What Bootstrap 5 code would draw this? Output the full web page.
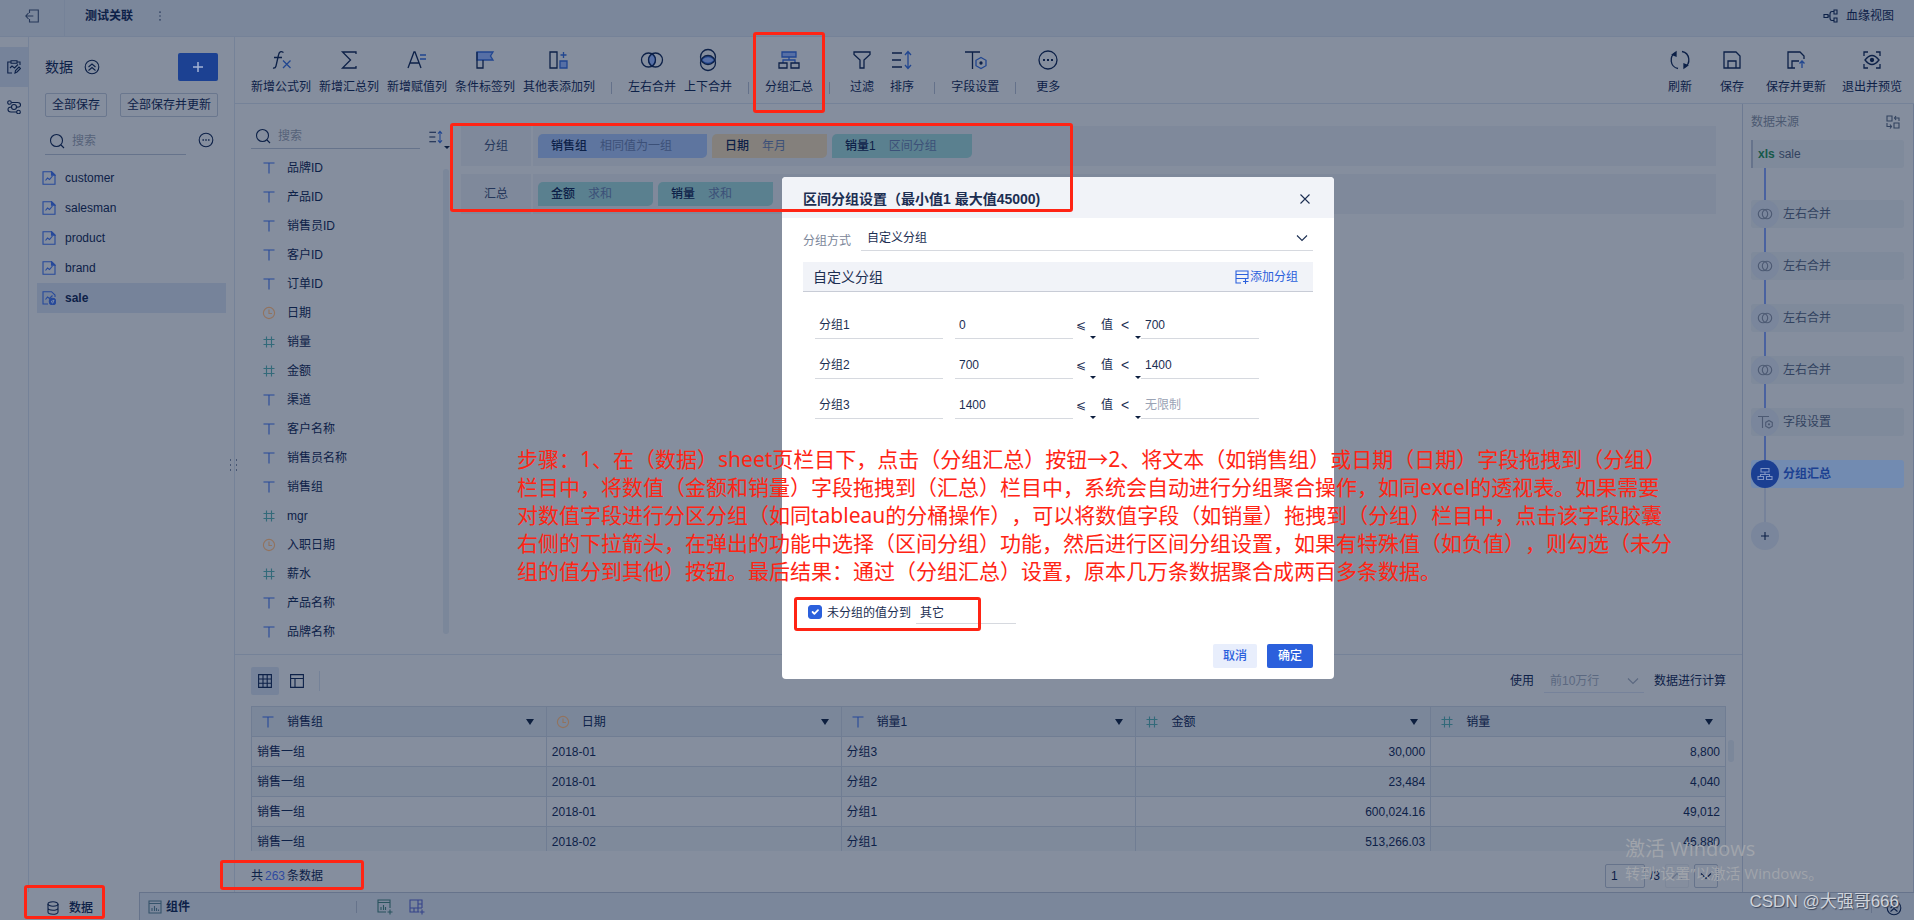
<!DOCTYPE html>
<html lang="zh-CN">
<head>
<meta charset="utf-8">
<meta name="viewport" content="width=device-width, initial-scale=1">
<title>测试关联</title>
<link href="https://cdn.jsdelivr.net/npm/bootstrap@5.3.0/dist/css/bootstrap.min.css" rel="stylesheet">
<style>
:root{--pg:#858e9e;--bar:#7b879b;--line:#758298;--ink:#0d2148;--mut:#3c4b67;--pri:#1c4192;--red:#ff2414}
body{background:var(--pg);color:var(--ink);font:12px/18px "Liberation Sans","Noto Sans CJK SC",sans-serif;overflow:hidden}
svg{fill:none;stroke:currentColor;stroke-width:1.1;flex:none;display:block}
button,input,select{font:inherit;color:inherit}
button{background:none;border:0;padding:0}
input,select{background:none;border:0;border-radius:0;outline:0;min-width:0}
a{color:inherit;text-decoration:none}
input::placeholder{color:#566279;opacity:1}
.i14{width:14px;height:14px}.i16{width:16px;height:16px}
.top-bar{height:37px;background:var(--bar);border-bottom:1px solid var(--line)}
.exit-box{width:65px;height:36px;border-right:1px solid var(--line)}
.rail{width:29px;border-right:1px solid var(--line);padding-top:10px}
.rail button{width:28px;height:40px}
.rail .on{background:#76839a}
.side{width:206px;border-right:1px solid var(--line);padding:16px 8px 0}
.btn-add{width:40px;height:28px;background:var(--pri);border-radius:2px;color:#a4b3d4}
.btn-line{height:24px;border:1px solid #6a778e;border-radius:2px;padding:0 6px}
.find{height:28px;border-bottom:1px solid #66738b;gap:5px}
.side .find{margin-top:2px}
.file-row{height:30px;padding-left:5px;gap:9px}
.file-row.on{background:#76839a;font-weight:700}
.tools{height:67px;border-bottom:1px solid var(--line);padding:11px 12px 0 16px}
.tool{min-width:32px;white-space:nowrap}
.tool svg{width:24px;height:24px;margin-bottom:6px;stroke-width:1.3}
.tools .set-a{gap:8px}.tools .set-b{gap:16px}.set-b .tool{min-width:36px}
.tool-sep{width:1px;height:12px;background:#64718a;margin:34px 8px 0}
.hl{fill:#566fa5;stroke:#214690}.bl{stroke:#214690}
.fields{width:215px;padding:17px 0 0 16px}
.fields .find{width:170px;padding-top:3px}
.sort-b svg{stroke-width:1.6}
.field-row{height:29px;padding-left:11px;gap:11px}
.ty-t{color:#27499a}.ty-d{color:#92735e}.ty-n{color:#336a7a}
.bar-v{width:6px;flex:none;border-radius:3px;background:#7b879a}
.drop-row{height:40px;background:#7f899b;gap:5px}
.drop-row .cap{width:72px;border-right:2px solid #858e9e;color:#24365a}
.pill{height:24px;border-radius:5px 0 5px 0;gap:13px;padding-left:13px;font-weight:500}
.pill span{font-weight:400;color:#3c5078}
.p-b{background:#5e759f}.p-o{background:#84807c}.p-g{background:#5a808f}
.w115{width:115px}.w140{width:140px}.w169{width:169px}
.flow{width:172px;border-left:1px solid #6d7a92;border-right:1px solid #6d7a92;padding:9px 9px 0 8px;color:#32425f}
.flow-h{margin-bottom:9px}
.step{height:28px;background:#7f8a9b;border-radius:3px;gap:4px}
.step-dot{width:28px;height:28px;border-radius:50%;background:#7a869c;color:#4d5a73}
.step.on{background:#728bb1;color:var(--pri);font-weight:700}
.step.on .step-dot{background:#1b3f92;color:#8195c4}
.step-line{width:2px;height:24px;background:#4a62a0;margin-left:13px}
.step-src{border-left:2px solid #66738b;border-radius:0 3px 3px 0;padding-left:5px}
.step-src b{color:#17594a}
.preview{border-top:1px solid var(--line);padding:12px 16px 0}
.vbtn{width:28px;height:28px;border-radius:2px}
.vbtn.on{background:#76839a}
.grid-box{height:145px;overflow:hidden;flex:1 1 0;min-width:0}
.grid-t{table-layout:fixed;border-collapse:collapse;width:100%}
.grid-t td,.grid-t th{height:30px;border:1px solid #707d93;padding:0 5px;font-weight:400;vertical-align:middle}
.grid-t th{background:#7b879a;padding:0 12px 0 9px}
.grid-t tbody tr:nth-child(even){background:#7f8a9b}
.tri{width:0;height:0;border:4px solid transparent;border-top:6px solid #0d1f3f;border-bottom:0}
.tri.sm{border-width:3px 3px 0}
.sel-rows{width:100px;height:24px;border-bottom:1px solid #76829a;color:#5b6880;padding-left:6px;margin:0 10px}
select{appearance:none}
.page-in{width:40px;height:24px;border:1px solid #66738b;border-radius:2px;padding-left:5px}
.page-b{width:24px;height:24px;border:1px solid #66738b;border-radius:2px}
.tabs-b{height:28px;background:var(--bar)}
.tabs-b .tab-d{width:140px;background:var(--pg);padding-left:46px;gap:9px;font-weight:500;border-right:1px solid #66738b}
.tabs-b .rest{border-top:1px solid #66738b}
.dlg{left:782px;top:177px;width:552px;height:502px;background:#fff;border-radius:4px;z-index:20;color:#1c2e52}
.dlg-head{height:41px;background:#f1f3f8;border-radius:4px 4px 0 0;padding:2px 22px 0 21px}
.dlg-head h1{font-size:14px;line-height:20px;font-weight:700}
.dlg-body{padding:8px 21px 0}
.ul{border-bottom:1px solid #d6d9df}
.sec-h{height:30px;background:#f1f3f8;border-bottom:1px solid #c8ccd6;padding:0 15px 0 10px;font-size:14px}
.sec-h button{font-size:12px;color:#2b60dc;gap:1px}
.rng{height:26px;margin-bottom:14px;padding-left:12px;margin-top:0}
.rng input{height:26px;padding:0 5px 2px 4px}
.rng input::placeholder{color:#9aa3b5}
.rng .n1{width:128px;margin-right:12px;padding-bottom:5px}.rng .n2{width:118px}
.op{width:20px;height:26px;position:relative;padding:0 4px 3px 0}
.op.lt{font-size:14px;padding-right:12px}
.op .tri{position:absolute;right:-3px;bottom:0}
.op.lt .tri{right:0}
.rng .val{padding:3px 8px 0}
.chk{width:14px;height:14px;margin:0;border-radius:2px}
.form-check-input.chk:checked{background-color:#2b60dc;border-color:#2b60dc}
.dlg .b{height:24px;border-radius:2px;font-weight:500}
.b-c{width:44px;background:#e8eefc;color:#2b60dc}.b-o{width:46px;background:#2b60dc;color:#fff}
.frame{position:absolute;border:3px solid var(--red);border-radius:3px;z-index:30;pointer-events:none}
.f-tool{inset:-16px -12px -10px -12px}
.f-grp{left:-11px;top:-3px;width:623px;height:89px}
.f-chk{left:-14px;top:-3px;width:187px;height:34px}
.f-cnt{left:-31px;top:-7px;width:144px;height:30px}
.f-dat{left:24px;bottom:1px;width:81px;height:34px}
.note{position:absolute;left:517px;top:445px;width:1170px;margin:0;color:var(--red);font:21px/28px "Noto Sans","Noto Sans CJK SC",sans-serif;font-kerning:none;font-feature-settings:"chws" 0,"halt" 0;text-spacing-trim:space-all;z-index:31;white-space:nowrap}
.wm{position:absolute;left:1625px;top:835px;color:#a0a4ab;font-family:"Open Sans","Noto Sans CJK SC",sans-serif;z-index:10;font-size:15px;line-height:20px}
.wm b{display:block;font-weight:400;font-size:20px;line-height:28px}
.csdn{position:absolute;right:15px;bottom:4px;font:17px/28px "Liberation Sans","Noto Sans CJK SC",sans-serif;color:#cfd3da;text-shadow:1px 1px 1px #3a4458;z-index:12}
.grip{position:absolute;left:228px;top:458px}
</style>
</head>
<body>
<svg width="0" height="0" class="position-absolute" aria-hidden="true">
<symbol id="t" viewBox="0 0 14 14"><path d="M1.500 2h11M7 2v10.500"/></symbol>
<symbol id="n" viewBox="0 0 14 14"><path d="M1.500 4.500h11M1.500 9.500h11M4.500 1.500v11M9.500 1.500v11"/></symbol>
<symbol id="d" viewBox="0 0 14 14"><circle cx="7" cy="7" r="5.600"/><path d="M7 3.500V7.500h3"/></symbol>
<symbol id="q" viewBox="0 0 16 16"><circle cx="7.500" cy="7.500" r="6"/><path d="M12 12l3 3"/></symbol>
<symbol id="f" viewBox="0 0 14 14"><path d="M1 .7h8.500L13 4v9.300H1zM3.500 9.500l2-2.500 2 1.500 3-3.500"/><path d="M9.500.7L13 4.200H9.500z" fill="currentColor"/></symbol>
<symbol id="m" viewBox="0 0 16 16"><circle cx="8" cy="8" r="6.800"/><path d="M4.500 8h1.400M7.300 8h1.400M10.100 8h1.400" stroke-width="1.500"/></symbol>
<symbol id="v" viewBox="0 0 24 24"><path class="hl" d="M12 6a7 7 0 0 1 0 12a7 7 0 0 1 0-12z"/><circle cx="8.500" cy="12" r="7"/><circle cx="15.500" cy="12" r="7"/></symbol>
<symbol id="vs" viewBox="0 0 16 16"><circle cx="6" cy="8" r="4.700"/><circle cx="10" cy="8" r="4.700"/></symbol>
<symbol id="g" viewBox="0 0 24 24"><path class="hl" d="M5 4h14v5H5z"/><path class="bl" d="M12 9v3M6 15v-3h12v3"/><path d="M2 15h8v5H2zM14 15h8v5h-8z"/></symbol>
<symbol id="gs" viewBox="0 0 16 16"><path d="M4 2.500h8v3.500H4zM8 6v2.500M3.500 10.500v-2h9v2M1 10.500h5.500v3H1zM9.500 10.500H15v3H9.500z"/></symbol>
<symbol id="fs" viewBox="0 0 24 24"><path d="M2 4h15M9.500 4v17"/><path class="bl" d="M18 9.500l5 2.800v5.400l-5 2.800-5-2.800v-5.400z"/><circle cx="18" cy="15" r="1" fill="currentColor"/></symbol>
<symbol id="so" viewBox="0 0 24 24"><path d="M2 5h10M2 12h9M2 19h10"/><path class="bl" d="M18 4v16M15 7l3-3.500L21 7M15 17l3 3.500 3-3.500"/></symbol>
<symbol id="c" viewBox="0 0 14 14"><path d="M2 4.500l5 5 5-5"/></symbol>
<symbol id="as" viewBox="0 0 14 14"><path d="M1 1h12v3.500H1zM1 4.500v8.500h5M1 8.500h12v-4M10.500 9v5M8 11.500h5.500"/></symbol>
<symbol id="ch" viewBox="0 0 14 14"><path d="M1 1h12v12H1zM1 3.500h12M4 11V8M6.500 11V6M8.500 11V8M10.500 11V9.500"/></symbol>
</svg>

<div class="d-flex flex-column vh-100 position-relative">
  <header class="top-bar d-flex align-items-center">
    <div class="exit-box d-flex align-items-center justify-content-center pb-1"><button aria-label="退出" class="d-flex"><svg class="i14" viewBox="0 0 14 14" style="color:#26385a"><path d="M4.500 4V1h8.800v12H4.500v-3M.8 7h7.500M3.500 4L.8 7l2.700 3"/></svg></button></div>
    <strong class="ps-3 ms-1 pb-1">测试关联</strong>
    <button class="ms-4 pb-1" aria-label="更多"><svg width="6" height="14" viewBox="0 0 6 14"><path d="M3 2.500v1.200M3 6.400v1.200M3 10.300v1.200" stroke-width="1.200"/></svg></button>
    <a href="#" class="ms-auto d-flex align-items-center gap-2 pe-3 me-1 pb-1"><svg width="15" height="14" viewBox="0 0 15 14"><path d="M1 5.500h4v3H1zM5 7h2M11 2.500H9Q7 2.500 7 5v4q0 2.500 2 2.500h2M11 1h3v4h-3zM11 9h3v4h-3z"/></svg>血缘视图</a>
  </header>

  <div class="d-flex flex-grow-1" style="min-height:0">
    <nav class="rail flex-shrink-0">
      <button class="on d-flex align-items-center justify-content-center" aria-label="数据编辑"><svg class="i14" viewBox="0 0 14 14"><path d="M5 13H.8V2H4M10 2h3v3M4 .8h6v2.400H4zM3 8l2-2 2.500 2L11 4.500M8 13l.5-2.500L12 7l1.500 1.500L10 12z"/></svg></button>
      <button class="d-flex align-items-center justify-content-center" aria-label="关系"><svg class="i14" viewBox="0 0 14 14"><circle cx="2.500" cy="2.500" r="1.800"/><circle cx="11.500" cy="12" r="1.800"/><circle cx="7" cy="7" r="2.500"/><path d="M4.500 2.500h6q3 0 3 2.500t-4 2M10 12H4q-3 0-3-2.500T4.500 7"/></svg></button>
    </nav>

    <aside class="side flex-shrink-0">
      <div class="px-2">
        <div class="d-flex align-items-center">
          <span style="font-size:14px">数据</span>
          <svg class="i16" viewBox="0 0 16 16" style="margin-left:11px"><circle cx="8" cy="8" r="6.800"/><path d="M4.500 8L8 5l3.500 3M4.500 11.500L8 8.500l3.500 3"/></svg>
          <button class="btn-add ms-auto d-flex align-items-center justify-content-center" aria-label="新增"><svg class="i14" viewBox="0 0 14 14"><path d="M7 2v10M2 7h10" stroke-width="1.500"/></svg></button>
        </div>
        <div class="d-flex justify-content-between mt-2 pt-1"><button class="btn-line">全部保存</button><button class="btn-line">全部保存并更新</button></div>
        <div class="d-flex align-items-center justify-content-between mt-2 pe-1">
          <label class="find d-flex align-items-center ps-1" style="width:141px"><svg class="i16"><use href="#q"/></svg><input class="w-75" placeholder="搜索" aria-label="搜索数据"></label>
          <button aria-label="更多"><svg class="i16"><use href="#m"/></svg></button>
        </div>
      </div>
      <div class="mt-2">
        <a href="#" class="file-row d-flex align-items-center"><svg class="i14 ty-t"><use href="#f"/></svg>customer</a>
        <a href="#" class="file-row d-flex align-items-center"><svg class="i14 ty-t"><use href="#f"/></svg>salesman</a>
        <a href="#" class="file-row d-flex align-items-center"><svg class="i14 ty-t"><use href="#f"/></svg>product</a>
        <a href="#" class="file-row d-flex align-items-center"><svg class="i14 ty-t"><use href="#f"/></svg>brand</a>
        <a href="#" class="file-row on d-flex align-items-center"><svg class="i14 ty-t" viewBox="0 0 14 14"><path d="M6 13H1V.7h8.500L13 4v2M3.500 8.500l2-2.500 2 1.500 3-3"/><circle cx="10.500" cy="10.500" r="3.200" fill="currentColor"/><path d="M9 10.500l3-1.300-1.200 3z" stroke="#8f9cb5" stroke-width=".7"/></svg>sale</a>
      </div>
    </aside>

    <div class="flex-grow-1 d-flex flex-column" style="min-width:0">
      <div class="tools d-flex justify-content-between flex-shrink-0">
        <div class="set-a d-flex">
          <button class="tool d-flex flex-column align-items-center"><svg viewBox="0 0 24 24"><path d="M14.500 4.500Q10.500 2 9.500 7L7 18q-.6 2.500-3 2M5 9.500h8"/><path class="bl" d="M14 12.500l7.500 7.500M21.500 12.500L14 20"/></svg>新增公式列</button>
          <button class="tool d-flex flex-column align-items-center"><svg viewBox="0 0 24 24"><path d="M19 6V4H5.500l8 8-8 8H19v-2"/></svg>新增汇总列</button>
          <button class="tool d-flex flex-column align-items-center"><svg viewBox="0 0 24 24"><path d="M3 20L9 4h1l6 16M5 15h9"/><path class="bl" d="M15 7h6M15 11h6"/></svg>新增赋值列</button>
          <button class="tool d-flex flex-column align-items-center"><svg viewBox="0 0 24 24"><path class="hl" d="M4 4h16l-2.500 4L20 12H4z"/><path d="M4 4v16h6v-8"/></svg>条件标签列</button>
          <button class="tool d-flex flex-column align-items-center"><svg viewBox="0 0 24 24"><path d="M3 4h7v16H3z"/><path class="hl" d="M13 13h7v7h-7z"/><path class="bl" d="M16.500 4v6M13.500 7h6"/></svg>其他表添加列</button>
          <span class="tool-sep"></span>
          <button class="tool d-flex flex-column align-items-center"><svg><use href="#v"/></svg>左右合并</button>
          <button class="tool d-flex flex-column align-items-center"><svg viewBox="0 0 24 24"><path class="hl" d="M5 12q7-7 14 0q-7 7-14 0z"/><circle cx="12" cy="9" r="7.500"/><circle cx="12" cy="15" r="7.500"/></svg>上下合并</button>
          <span class="tool-sep"></span>
          <button class="tool d-flex flex-column align-items-center position-relative"><svg><use href="#g"/></svg>分组汇总<span class="frame f-tool"></span></button>
          <span class="tool-sep"></span>
          <button class="tool d-flex flex-column align-items-center"><svg viewBox="0 0 24 24"><path d="M4 4h16v2.500L14 12v8h-4v-8L4 6.500z"/></svg>过滤</button>
          <button class="tool d-flex flex-column align-items-center"><svg><use href="#so"/></svg>排序</button>
          <span class="tool-sep"></span>
          <button class="tool d-flex flex-column align-items-center"><svg><use href="#fs"/></svg>字段设置</button>
          <span class="tool-sep"></span>
          <button class="tool d-flex flex-column align-items-center"><svg viewBox="0 0 24 24"><circle cx="12" cy="12" r="9"/><path d="M7 12h2M11 12h2M15 12h2" stroke-width="2"/></svg>更多</button>
        </div>
        <div class="set-b d-flex">
          <button class="tool d-flex flex-column align-items-center"><svg viewBox="0 0 24 24"><path d="M8 4.500A8.500 8.500 0 0 0 10 20.500M16 19.500A8.500 8.500 0 0 0 14 3.500"/><path d="M4.500 6.500L8 4v4zM19.500 17.500L16 20v-4z" fill="currentColor"/></svg>刷新</button>
          <button class="tool d-flex flex-column align-items-center"><svg viewBox="0 0 24 24"><path d="M4 4h12l4 4v12H4zM8 20v-7h8v7"/></svg>保存</button>
          <button class="tool d-flex flex-column align-items-center"><svg viewBox="0 0 24 24"><path d="M11 20H4V4h12l4 4v3M8 20v-7h7"/><path class="bl" d="M18 20v-7M15.500 15.500L18 13l2.500 2.500"/></svg>保存并更新</button>
          <button class="tool d-flex flex-column align-items-center"><svg viewBox="0 0 24 24"><path d="M4 8V4h4M16 4h4v4M20 16v4h-4M8 20H4v-4M5 12q7-9 14 0q-7 9-14 0z"/><circle cx="12" cy="12" r="1.500" fill="currentColor"/></svg>退出并预览</button>
        </div>
      </div>

      <div class="d-flex flex-grow-1" style="min-height:0">
        <div class="flex-grow-1 d-flex flex-column" style="min-width:0">
          <div class="d-flex flex-grow-1" style="min-height:0">
            <div class="fields flex-shrink-0">
              <div class="d-flex">
                <label class="find d-flex align-items-center ps-1"><svg class="i16"><use href="#q"/></svg><input class="w-75" placeholder="搜索" aria-label="搜索字段"></label>
                <button class="sort-b d-flex align-items-end ms-2" aria-label="排序"><svg class="i16 mb-1"><use href="#so"/></svg><span class="tri sm"></span></button>
              </div>
              <div class="d-flex justify-content-between pt-1">
                <div class="flex-grow-1">
                  <div class="field-row d-flex align-items-center"><svg class="i14 ty-t"><use href="#t"/></svg>品牌ID</div>
                  <div class="field-row d-flex align-items-center"><svg class="i14 ty-t"><use href="#t"/></svg>产品ID</div>
                  <div class="field-row d-flex align-items-center"><svg class="i14 ty-t"><use href="#t"/></svg>销售员ID</div>
                  <div class="field-row d-flex align-items-center"><svg class="i14 ty-t"><use href="#t"/></svg>客户ID</div>
                  <div class="field-row d-flex align-items-center"><svg class="i14 ty-t"><use href="#t"/></svg>订单ID</div>
                  <div class="field-row d-flex align-items-center"><svg class="i14 ty-d"><use href="#d"/></svg>日期</div>
                  <div class="field-row d-flex align-items-center"><svg class="i14 ty-n"><use href="#n"/></svg>销量</div>
                  <div class="field-row d-flex align-items-center"><svg class="i14 ty-n"><use href="#n"/></svg>金额</div>
                  <div class="field-row d-flex align-items-center"><svg class="i14 ty-t"><use href="#t"/></svg>渠道</div>
                  <div class="field-row d-flex align-items-center"><svg class="i14 ty-t"><use href="#t"/></svg>客户名称</div>
                  <div class="field-row d-flex align-items-center"><svg class="i14 ty-t"><use href="#t"/></svg>销售员名称</div>
                  <div class="field-row d-flex align-items-center"><svg class="i14 ty-t"><use href="#t"/></svg>销售组</div>
                  <div class="field-row d-flex align-items-center"><svg class="i14 ty-n"><use href="#n"/></svg>mgr</div>
                  <div class="field-row d-flex align-items-center"><svg class="i14 ty-d"><use href="#d"/></svg>入职日期</div>
                  <div class="field-row d-flex align-items-center"><svg class="i14 ty-n"><use href="#n"/></svg>薪水</div>
                  <div class="field-row d-flex align-items-center"><svg class="i14 ty-t"><use href="#t"/></svg>产品名称</div>
                  <div class="field-row d-flex align-items-center"><svg class="i14 ty-t"><use href="#t"/></svg>品牌名称</div>
                </div>
                <div class="bar-v mt-3" style="margin:0 1px 12px 0"></div>
              </div>
            </div>
            <div class="flex-grow-1" style="padding:22px 26px 0 11px">
              <div class="position-relative d-flex flex-column gap-2">
                <div class="drop-row d-flex align-items-center">
                  <div class="cap h-100 d-flex align-items-center justify-content-center">分组</div>
                  <div class="pill p-b w169 d-flex align-items-center">销售组<span>相同值为一组</span></div>
                  <div class="pill p-o w115 d-flex align-items-center">日期<span>年月</span></div>
                  <div class="pill p-g w140 d-flex align-items-center">销量1<span>区间分组</span></div>
                </div>
                <div class="drop-row d-flex align-items-center">
                  <div class="cap h-100 d-flex align-items-center justify-content-center">汇总</div>
                  <div class="pill p-g w115 d-flex align-items-center">金额<span>求和</span></div>
                  <div class="pill p-g w115 d-flex align-items-center">销量<span>求和</span></div>
                </div>
                <span class="frame f-grp"></span>
              </div>
            </div>
          </div>

          <section class="preview flex-shrink-0">
            <div class="d-flex align-items-center">
              <button class="vbtn on d-flex align-items-center justify-content-center" aria-label="表格视图"><svg class="i14" viewBox="0 0 14 14"><path d="M.6.600h12.800v12.800H.6zM.6 5h12.800M.6 9.200h12.800M5 .6v12.800M9.200.6v12.800"/></svg></button>
              <button class="vbtn d-flex align-items-center justify-content-center ms-1" aria-label="结构视图"><svg class="i14" viewBox="0 0 14 14"><path d="M.6.600h12.800v12.800H.6zM.6 4.500h12.800M5 4.500v9"/></svg></button>
              <span class="ms-2 border-start" style="height:20px;border-color:#758298!important"></span>
              <label for="rows" class="ms-auto">使用</label>
              <div class="sel-rows d-flex align-items-center"><select id="rows" class="flex-grow-1 p-0"><option>前10万行</option></select><svg class="i14 me-1"><use href="#c"/></svg></div>
              <span>数据进行计算</span>
            </div>
            <div class="d-flex" style="margin-top:11px">
              <div class="grid-box">
                <table class="grid-t">
                  <thead><tr>
                    <th><div class="d-flex align-items-center"><svg class="i14 ty-t me-2"><use href="#t"/></svg><span class="ps-1">销售组</span><span class="tri ms-auto"></span></div></th>
                    <th><div class="d-flex align-items-center"><svg class="i14 ty-d me-2"><use href="#d"/></svg><span class="ps-1">日期</span><span class="tri ms-auto"></span></div></th>
                    <th><div class="d-flex align-items-center"><svg class="i14 ty-t me-2"><use href="#t"/></svg><span class="ps-1">销量1</span><span class="tri ms-auto"></span></div></th>
                    <th><div class="d-flex align-items-center"><svg class="i14 ty-n me-2"><use href="#n"/></svg><span class="ps-1">金额</span><span class="tri ms-auto"></span></div></th>
                    <th><div class="d-flex align-items-center"><svg class="i14 ty-n me-2"><use href="#n"/></svg><span class="ps-1">销量</span><span class="tri ms-auto"></span></div></th>
                  </tr></thead>
                  <tbody>
                    <tr><td>销售一组</td><td>2018-01</td><td>分组3</td><td class="text-end">30,000</td><td class="text-end">8,800</td></tr>
                    <tr><td>销售一组</td><td>2018-01</td><td>分组2</td><td class="text-end">23,484</td><td class="text-end">4,040</td></tr>
                    <tr><td>销售一组</td><td>2018-01</td><td>分组1</td><td class="text-end">600,024.16</td><td class="text-end">49,012</td></tr>
                    <tr><td>销售一组</td><td>2018-02</td><td>分组1</td><td class="text-end">513,266.03</td><td class="text-end">46,880</td></tr>
                  </tbody>
                </table>
              </div>
              <div class="bar-v" style="height:22px;margin:34px -8px 0 2px"></div>
            </div>
            <div class="d-flex align-items-center justify-content-between" style="height:41px;padding-top:8px">
              <div class="position-relative">共<span style="color:#2f4aa0;padding:0 2px">263</span>条数据<span class="frame f-cnt"></span></div>
              <div class="d-flex align-items-center pe-2" style="gap:5px"><input class="page-in" value="1" aria-label="页码"><span>/3</span><button class="page-b d-flex align-items-center justify-content-center opacity-25" aria-label="上一页"><svg class="i14" viewBox="0 0 14 14"><path d="M2 9.500l5-5 5 5"/></svg></button><button class="page-b d-flex align-items-center justify-content-center" aria-label="下一页"><svg class="i14"><use href="#c"/></svg></button></div>
            </div>
          </section>
        </div>

        <aside class="flow flex-shrink-0">
          <div class="flow-h d-flex align-items-center justify-content-between pe-1"><span style="color:#4c5971">数据来源</span><svg class="i14" viewBox="0 0 14 14"><path d="M1 1h5v5H1zM8 8h5v5H8zM8.500 3H13v3M10 1L8.500 3 10 5M5.500 11.500H1V8M4 9.500l1.500 2L4 13.500"/></svg></div>
          <div class="step step-src d-flex align-items-center"><b>xls</b>sale</div>
          <div class="step-line" style="height:32px"></div>
          <div class="step d-flex align-items-center"><span class="step-dot d-flex align-items-center justify-content-center"><svg class="i16"><use href="#vs"/></svg></span>左右合并</div>
          <div class="step-line"></div>
          <div class="step d-flex align-items-center"><span class="step-dot d-flex align-items-center justify-content-center"><svg class="i16"><use href="#vs"/></svg></span>左右合并</div>
          <div class="step-line"></div>
          <div class="step d-flex align-items-center"><span class="step-dot d-flex align-items-center justify-content-center"><svg class="i16"><use href="#vs"/></svg></span>左右合并</div>
          <div class="step-line"></div>
          <div class="step d-flex align-items-center"><span class="step-dot d-flex align-items-center justify-content-center"><svg class="i16"><use href="#vs"/></svg></span>左右合并</div>
          <div class="step-line"></div>
          <div class="step d-flex align-items-center"><span class="step-dot d-flex align-items-center justify-content-center"><svg class="i16" viewBox="0 0 16 16"><path d="M1 2.500h11M5.500 2.500V14M12 6.500l3.300 1.900v3.800L12 14l-3.300-1.800V8.400z"/><circle cx="12" cy="10.300" r=".6"/></svg></span>字段设置</div>
          <div class="step-line"></div>
          <div class="step on d-flex align-items-center"><span class="step-dot d-flex align-items-center justify-content-center"><svg class="i16"><use href="#gs"/></svg></span>分组汇总</div>
          <div class="step-line" style="height:34px;background:#76829a"></div>
          <button class="step-dot d-flex align-items-center justify-content-center" aria-label="添加步骤" style="color:#0d2148"><svg width="10" height="10" viewBox="0 0 10 10"><path d="M5 1v8M1 5h8"/></svg></button>
        </aside>
      </div>
    </div>
  </div>

  <footer class="tabs-b d-flex flex-shrink-0 position-relative">
    <a href="#" class="tab-d d-flex align-items-center pt-1"><svg class="i14" viewBox="0 0 14 14"><ellipse cx="7" cy="3" rx="5" ry="2.200"/><path d="M2 3v8c0 3 10 3 10 0V3M2 7c0 3 10 3 10 0"/></svg>数据</a>
    <div class="rest flex-grow-1 d-flex align-items-center ps-2">
      <a href="#" class="d-flex align-items-center fw-bold"><svg class="i14 me-1" style="color:#35536b"><use href="#ch"/></svg>组件</a>
      <span style="width:1px;height:12px;background:#66738b;margin:0 20px 0 166px"></span>
      <button aria-label="新增组件"><svg class="i16" viewBox="0 0 16 16" style="color:#29535e"><path d="M9 13H1V1h12v8M1 3.500h12M4 11V8M6.500 11V6M8.500 11V8M13 10.500v5M10.500 13h5"/></svg></button>
      <button aria-label="新增仪表板" class="ms-3"><svg class="i16" viewBox="0 0 16 16" style="color:#35438a"><path d="M10 13H1V1h12v8M1 9h12M9 1v12M9 5h4M5 9v4M13 10.500v5M10.500 13h5"/></svg></button>
      <span class="ms-auto" style="width:1px;height:12px;background:#66738b"></span>
      <button aria-label="展开" style="margin:2px 12px 0 14px"><svg class="i16" viewBox="0 0 16 16"><circle cx="8" cy="8" r="6.800"/><path d="M4.500 8L8 5l3.500 3M4.500 11.500L8 8.500l3.500 3"/></svg></button>
    </div>
    <span class="frame f-dat"></span>
  </footer>

  <svg class="grip" width="12" height="14" viewBox="0 0 12 14"><path d="M2 2h1M8 2h1M2 7h1M8 7h1M2 12h1M8 12h1"/></svg>

  <div class="dlg position-absolute d-flex flex-column" role="dialog" aria-labelledby="dt">
    <div class="dlg-head d-flex align-items-center justify-content-between"><h1 id="dt" class="m-0">区间分组设置（最小值1 最大值45000)</h1><button aria-label="关闭"><svg class="i14" viewBox="0 0 14 14"><path d="M2.500 2.500l9 9M11.500 2.500l-9 9"/></svg></button></div>
    <div class="dlg-body">
      <div class="d-flex align-items-center">
        <label for="mode" style="width:58px;color:#7b8699" class="pt-1">分组方式</label>
        <div class="ul flex-grow-1 d-flex align-items-center" style="height:25px;padding:0 4px 0 6px"><select id="mode" class="flex-grow-1 p-0"><option>自定义分组</option></select><svg class="i14"><use href="#c"/></svg></div>
      </div>
      <div class="sec-h d-flex align-items-center justify-content-between" style="margin:11px 0 21px"><span>自定义分组</span><button class="d-flex align-items-center"><svg class="i14"><use href="#as"/></svg>添加分组</button></div>
      <div class="rng d-flex"><input class="n1 ul" value="分组1" aria-label="名称1"><input class="n2 ul" value="0" aria-label="下限1"><button class="op">⩽<span class="tri sm"></span></button><span class="val">值</span><button class="op lt">&lt;<span class="tri sm"></span></button><input class="n2 ul" value="700" aria-label="上限1"></div>
      <div class="rng d-flex"><input class="n1 ul" value="分组2" aria-label="名称2"><input class="n2 ul" value="700" aria-label="下限2"><button class="op">⩽<span class="tri sm"></span></button><span class="val">值</span><button class="op lt">&lt;<span class="tri sm"></span></button><input class="n2 ul" value="1400" aria-label="上限2"></div>
      <div class="rng d-flex"><input class="n1 ul" value="分组3" aria-label="名称3"><input class="n2 ul" value="1400" aria-label="下限3"><button class="op">⩽<span class="tri sm"></span></button><span class="val">值</span><button class="op lt">&lt;<span class="tri sm"></span></button><input class="n2 ul" placeholder="无限制" aria-label="上限3"></div>
    </div>
    <div class="mt-auto position-relative d-flex align-items-center" style="margin:0 26px 20px">
      <input type="checkbox" class="form-check-input chk" id="other" checked><label for="other" style="margin:1px 5px 0">未分组的值分到</label><input class="ul px-1" style="width:100px;height:24px" value="其它" aria-label="其它分组名称"><span class="frame f-chk"></span>
    </div>
    <div class="d-flex justify-content-end" style="gap:10px;padding:0 21px 11px"><button class="b b-c">取消</button><button class="b b-o">确定</button></div>
  </div>

  <p class="note">步骤：1、在（数据）sheet页栏目下，点击（分组汇总）按钮→2、将文本（如销售组）或日期（日期）字段拖拽到（分组）<br>栏目中，将数值（金额和销量）字段拖拽到（汇总）栏目中，系统会自动进行分组聚合操作，如同excel的透视表。如果需要<br>对数值字段进行分区分组（如同tableau的分桶操作），可以将数值字段（如销量）拖拽到（分组）栏目中，点击该字段胶囊<br>右侧的下拉箭头，在弹出的功能中选择（区间分组）功能，然后进行区间分组设置，如果有特殊值（如负值），则勾选（未分<br>组的值分到其他）按钮。最后结果：通过（分组汇总）设置，原本几万条数据聚合成两百多条数据。</p>
  <div class="wm"><b>激活 Windows</b>转到“设置”以激活 Windows。</div>
  <div class="csdn">CSDN @大强哥666</div>
</div>
<script src="https://cdn.jsdelivr.net/npm/bootstrap@5.3.0/dist/js/bootstrap.bundle.min.js"></script>
</body>
</html>
